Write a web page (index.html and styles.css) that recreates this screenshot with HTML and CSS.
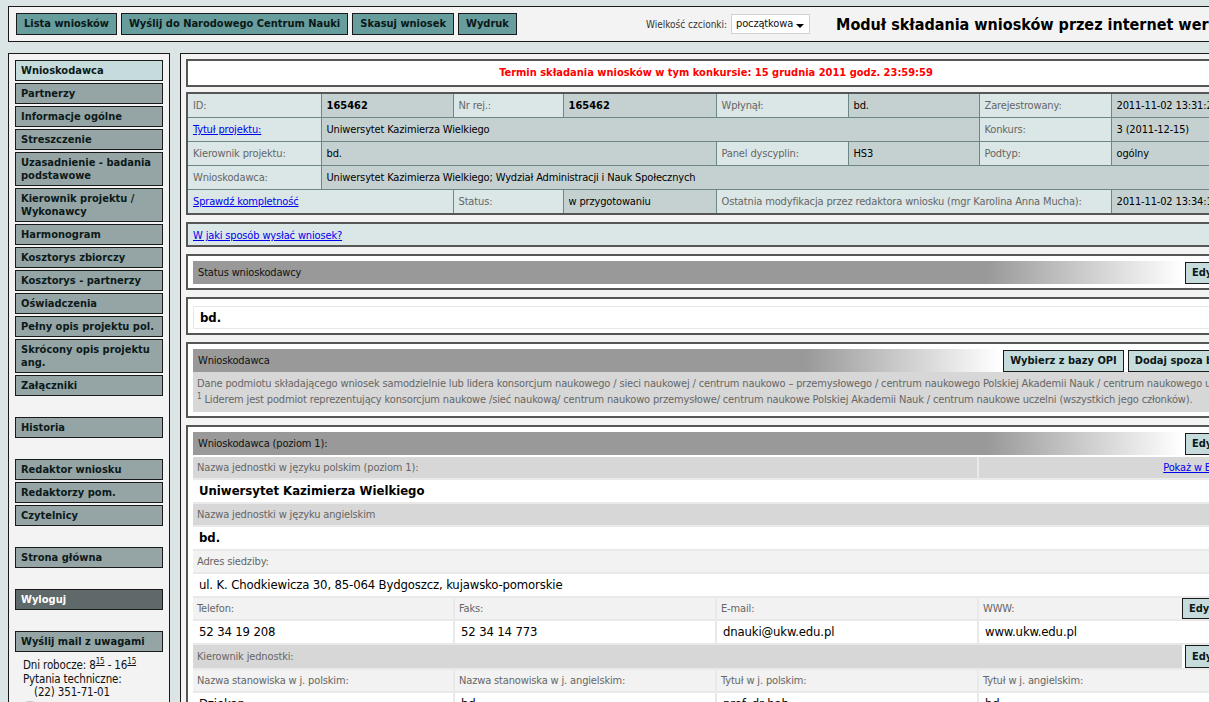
FILE: index.html
```html
<!DOCTYPE html>
<html lang="pl">
<head>
<meta charset="utf-8">
<title>Moduł składania wniosków</title>
<link rel="stylesheet" href="styles.css">
</head>
<body>
<header class="top">
  <div class="topbtns">
    <span class="tbtn">Lista wniosków</span>
    <span class="tbtn">Wyślij do Narodowego Centrum Nauki</span>
    <span class="tbtn">Skasuj wniosek</span>
    <span class="tbtn">Wydruk</span>
  </div>
  <div class="fontsize">
    <span class="fslabel">Wielkość czcionki:</span>
    <span class="select">początkowa<span class="arrow"></span></span>
  </div>
  <div class="apptitle">Moduł składania wniosków przez internet wersja 3.1</div>
</header>

<div class="layout">
  <nav class="side">
    <a class="item active">Wnioskodawca</a>
    <a class="item">Partnerzy</a>
    <a class="item">Informacje ogólne</a>
    <a class="item">Streszczenie</a>
    <a class="item">Uzasadnienie - badania podstawowe</a>
    <a class="item">Kierownik projektu / Wykonawcy</a>
    <a class="item">Harmonogram</a>
    <a class="item">Kosztorys zbiorczy</a>
    <a class="item">Kosztorys - partnerzy</a>
    <a class="item">Oświadczenia</a>
    <a class="item">Pełny opis projektu pol.</a>
    <a class="item">Skrócony opis projektu ang.</a>
    <a class="item">Załączniki</a>
    <a class="item sp">Historia</a>
    <a class="item sp">Redaktor wniosku</a>
    <a class="item">Redaktorzy pom.</a>
    <a class="item">Czytelnicy</a>
    <a class="item sp">Strona główna</a>
    <a class="item sp dark">Wyloguj</a>
    <a class="item sp">Wyślij mail z uwagami</a>
    <div class="hours">
      <div>Dni robocze: 8<sup>15</sup> - 16<sup>15</sup></div>
      <div>Pytania techniczne:</div>
      <div class="indent">(22) 351-71-01</div>
      <div class="roundicon"></div>
    </div>
  </nav>

  <main class="main">
    <div class="panel deadline">Termin składania wniosków w tym konkursie: 15 grudnia 2011 godz. 23:59:59</div>

    <table class="info">
      <colgroup>
        <col class="w134"><col class="w132"><col class="w110"><col class="w153">
        <col class="w132"><col class="w131"><col class="w132"><col>
      </colgroup>
      <tr>
        <td class="l">ID:</td><td class="v b">165462</td>
        <td class="l">Nr rej.:</td><td class="v b">165462</td>
        <td class="l">Wpłynął:</td><td class="v">bd.</td>
        <td class="l">Zarejestrowany:</td><td class="v">2011-11-02 13:31:24</td>
      </tr>
      <tr>
        <td class="l"><a href="#">Tytuł projektu:</a></td>
        <td class="v" colspan="5">Uniwersytet Kazimierza Wielkiego</td>
        <td class="l">Konkurs:</td><td class="v">3 (2011-12-15)</td>
      </tr>
      <tr>
        <td class="l">Kierownik projektu:</td><td class="v" colspan="3">bd.</td>
        <td class="l">Panel dyscyplin:</td><td class="v">HS3</td>
        <td class="l">Podtyp:</td><td class="v">ogólny</td>
      </tr>
      <tr>
        <td class="l">Wnioskodawca:</td>
        <td class="v" colspan="7">Uniwersytet Kazimierza Wielkiego; Wydział Administracji i Nauk Społecznych</td>
      </tr>
      <tr>
        <td class="l" colspan="2"><a href="#">Sprawdź kompletność</a></td>
        <td class="l">Status:</td><td class="v">w przygotowaniu</td>
        <td class="l" colspan="3">Ostatnia modyfikacja przez redaktora wniosku (mgr Karolina Anna Mucha):</td>
        <td class="v">2011-11-02 13:34:10</td>
      </tr>
    </table>

    <div class="panel howto"><a href="#">W jaki sposób wysłać wniosek?</a></div>

    <section class="panel sec">
      <div class="hdr">
        <div class="hdr-title">Status wnioskodawcy</div>
        <div class="hdr-btns"><span class="btn edit">Edytuj</span></div>
      </div>
    </section>

    <section class="panel sec">
      <div class="valbox">bd.</div>
    </section>

    <section class="panel sec">
      <div class="hdr">
        <div class="hdr-title">Wnioskodawca</div>
        <div class="hdr-btns"><span class="btn">Wybierz z bazy OPI</span><span class="btn">Dodaj spoza bazy</span></div>
      </div>
      <div class="desc">
        <div>Dane podmiotu składającego wniosek samodzielnie lub lidera konsorcjum naukowego / sieci naukowej / centrum naukowo – przemysłowego / centrum naukowego Polskiej Akademii Nauk / centrum naukowego uczelni<sup>1</sup></div>
        <div><sup>1</sup> Liderem jest podmiot reprezentujący konsorcjum naukowe /sieć naukową/ centrum naukowo przemysłowe/ centrum naukowe Polskiej Akademii Nauk / centrum naukowe uczelni (wszystkich jego członków).</div>
      </div>
    </section>

    <section class="panel sec">
      <div class="hdr">
        <div class="hdr-title">Wnioskodawca (poziom 1):</div>
        <div class="hdr-btns"><span class="btn edit">Edytuj</span></div>
      </div>
      <div class="grid">
        <div class="c lab2 s3">Nazwa jednostki w języku polskim (poziom 1):</div>
        <div class="c lab2 right"><a href="#">Pokaż w Bazie</a></div>
        <div class="c val s4 b">Uniwersytet Kazimierza Wielkiego</div>
        <div class="c lab2 s4">Nazwa jednostki w języku angielskim</div>
        <div class="c val s4 b">bd.</div>
        <div class="c lab1 s4">Adres siedziby:</div>
        <div class="c val s4">ul. K. Chodkiewicza 30, 85-064 Bydgoszcz, kujawsko-pomorskie</div>
        <div class="c lab1">Telefon:</div>
        <div class="c lab1">Faks:</div>
        <div class="c lab1">E-mail:</div>
        <div class="c lab1 withbtn"><span>WWW:</span><span class="btn edit">Edytuj</span></div>
        <div class="c val">52 34 19 208</div>
        <div class="c val">52 34 14 773</div>
        <div class="c val">dnauki@ukw.edu.pl</div>
        <div class="c val">www.ukw.edu.pl</div>
        <div class="s4 rowbtn"><div class="c lab2 grow">Kierownik jednostki:</div><span class="btn edit">Edytuj</span></div>
        <div class="c lab1">Nazwa stanowiska w j. polskim:</div>
        <div class="c lab1">Nazwa stanowiska w j. angielskim:</div>
        <div class="c lab1">Tytuł w j. polskim:</div>
        <div class="c lab1">Tytuł w j. angielskim:</div>
        <div class="c val">Dziekan</div>
        <div class="c val">bd.</div>
        <div class="c val">prof. dr hab.</div>
        <div class="c val">bd.</div>
      </div>
    </section>
  </main>
</div>
</body>
</html>
```
FILE: styles.css
```css
html { overflow: hidden; }
body {
  margin: 0;
  padding: 6px 0 0 8px;
  background: #dbe5e5;
  font-family: "DejaVu Sans Condensed", "DejaVu Sans", sans-serif;
  font-size: 11px;
  letter-spacing: -0.15px;
  color: #000;
  width: 1300px;
}
a { color: #0000ee; text-decoration: underline; cursor: pointer; }

/* top bar */
.top {
  box-sizing: border-box;
  width: 1244px;
  height: 36px;
  border: 1px solid #1a1a1a;
  background: #f3f3f3;
  padding: 6px 0 6px 7px;
  display: flex;
  align-items: center;
  white-space: nowrap;
  overflow: hidden;
}
.topbtns { display: flex; gap: 4px; }
.tbtn {
  box-sizing: border-box;
  height: 22px;
  line-height: 20px;
  padding: 0 7px;
  background: #679d9d;
  border: 1px solid #1a1a1a;
  font-weight: bold;
  letter-spacing: 0;
  color: #0a1818;
}
.fontsize { display: flex; align-items: center; margin-left: 129px; gap: 4px; }
.fslabel { font-size: 10px; color: #333; letter-spacing: 0; }
.select {
  box-sizing: border-box;
  width: 79px;
  height: 20px;
  line-height: 18px;
  border: 1px solid #cdd3d3;
  background: #fff;
  padding-left: 4px;
  position: relative;
  color: #111;
}
.arrow {
  position: absolute;
  right: 5px;
  top: 9px;
  width: 0; height: 0;
  border-left: 4px solid transparent;
  border-right: 4px solid transparent;
  border-top: 4px solid #000;
}
.apptitle { margin-left: 26px; font-size: 16px; font-weight: bold; color: #000; letter-spacing: 0; }

/* layout */
.layout { display: flex; gap: 10px; margin-top: 11px; align-items: flex-start; }

.side {
  box-sizing: border-box;
  width: 162px;
  height: 680px;
  border: 1px solid #1a1a1a;
  background: #f3f3f3;
  padding: 6px;
  display: flex;
  flex-direction: column;
  gap: 2px;
}
.item {
  display: block;
  border: 1px solid #1a1a1a;
  background: #95a5a5;
  color: #0c1a1a;
  font-weight: bold;
  letter-spacing: 0;
  text-decoration: none;
  padding: 3px 5px;
  line-height: 13px;
}
.item.active { background: #c6dcdc; }
.item.dark { background: #5f6969; color: #fff; }
.item.sp { margin-top: 19px; }
.hours {
  margin-top: 5px;
  padding-left: 8px;
  font-size: 11.5px;
  line-height: 13.5px;
  color: #111;
}
.hours sup { font-size: 8px; text-decoration: underline; vertical-align: 5px; line-height: 0; }
.hours .indent { padding-left: 11px; }
.roundicon {
  width: 22px; height: 22px;
  margin: 1px 0 0 -5px;
  border: 1px solid #b8c2c2;
  border-radius: 50%;
  background: #e8eded;
}

/* main */
.main {
  box-sizing: border-box;
  width: 1072px;
  height: 700px;
  border: 1px solid #1a1a1a;
  background: #f3f3f3;
  padding: 5px;
  display: flex;
  flex-direction: column;
}
.panel {
  border: 2px solid #565656;
  background: #fff;
  margin-top: 7px;
}
.deadline {
  margin-top: 0;
  height: 24px;
  line-height: 24px;
  text-align: center;
  color: #ff0000;
  font-weight: bold;
  letter-spacing: 0;
}

.info {
  margin-top: 5px;
  width: 1060px;
  table-layout: fixed;
  border-collapse: collapse;
  border: 2px solid #565656;
}
.w134 { width: 134px; } .w132 { width: 132px; } .w110 { width: 110px; }
.w153 { width: 153px; } .w131 { width: 131px; }
.info td {
  height: 23px;
  border: 1px solid #6d8686;
  padding: 0 5px;
  white-space: nowrap;
  overflow: hidden;
  vertical-align: middle;
}
.info td.l { background: #dbe6e6; color: #666; }
.info td.v { background: #c5d1d1; color: #000; }
.b { font-weight: bold; letter-spacing: 0; }

.howto {
  background: #dbe6e6;
  height: 21px;
  line-height: 23px;
  padding-left: 5px;
}

.sec { padding: 5px 5px 4px 5px; }
.hdr { display: flex; height: 23px; gap: 3px; }
.hdr-title {
  flex: 1;
  padding-left: 5px;
  line-height: 23px;
  color: #111;
  background: linear-gradient(to right, #999 calc(100% - 195px), #fff 100%);
}
.hdr-btns { display: flex; gap: 4px; align-items: center; }
.btn {
  box-sizing: border-box;
  height: 22px;
  line-height: 20px;
  padding: 0 6px;
  background: #c6dcdc;
  border: 1px solid #1a1a1a;
  font-weight: bold;
  letter-spacing: 0;
  color: #0a1818;
  white-space: nowrap;
}
.btn.edit { min-width: 54px; padding: 0 6px; }

.valbox {
  height: 21px;
  line-height: 21px;
  border: 1px solid #e8e8e8;
  padding-left: 6px;
  font-size: 13px;
  font-weight: bold;
  letter-spacing: 0;
  margin: 2px 0 0;
}

.desc {
  background: #d7d7d7;
  color: #666;
  padding: 4px;
  line-height: 16px;
  white-space: nowrap;
  overflow: hidden;
}
.desc sup { font-size: 8px; vertical-align: 4px; line-height: 0; }

.grid {
  margin-top: 2px;
  display: grid;
  grid-template-columns: repeat(4, 1fr);
  gap: 2px;
  background: #e9e9e9;
}
.c { white-space: nowrap; overflow: hidden; }
.lab1, .lab2 { height: 21px; line-height: 21px; padding: 0 4px; color: #666; }
.lab1 { background: #f2f2f2; }
.lab2 { background: #d7d7d7; }
.val { height: 22px; line-height: 22px; padding: 0 6px; background: #fff; font-size: 13px; color: #000; }
.s3 { grid-column: span 3; }
.s4 { grid-column: span 4; }
.right { text-align: right; padding-right: 8px; }
.withbtn { display: flex; justify-content: space-between; align-items: center; padding-right: 3px; }
.withbtn .btn { height: 21px; line-height: 19px; }
.rowbtn { display: flex; gap: 3px; background: #fff; height: 23px; }
.rowbtn .grow { flex: 1; height: 23px; line-height: 23px; }
.rowbtn .btn { height: 23px; line-height: 21px; }
```
